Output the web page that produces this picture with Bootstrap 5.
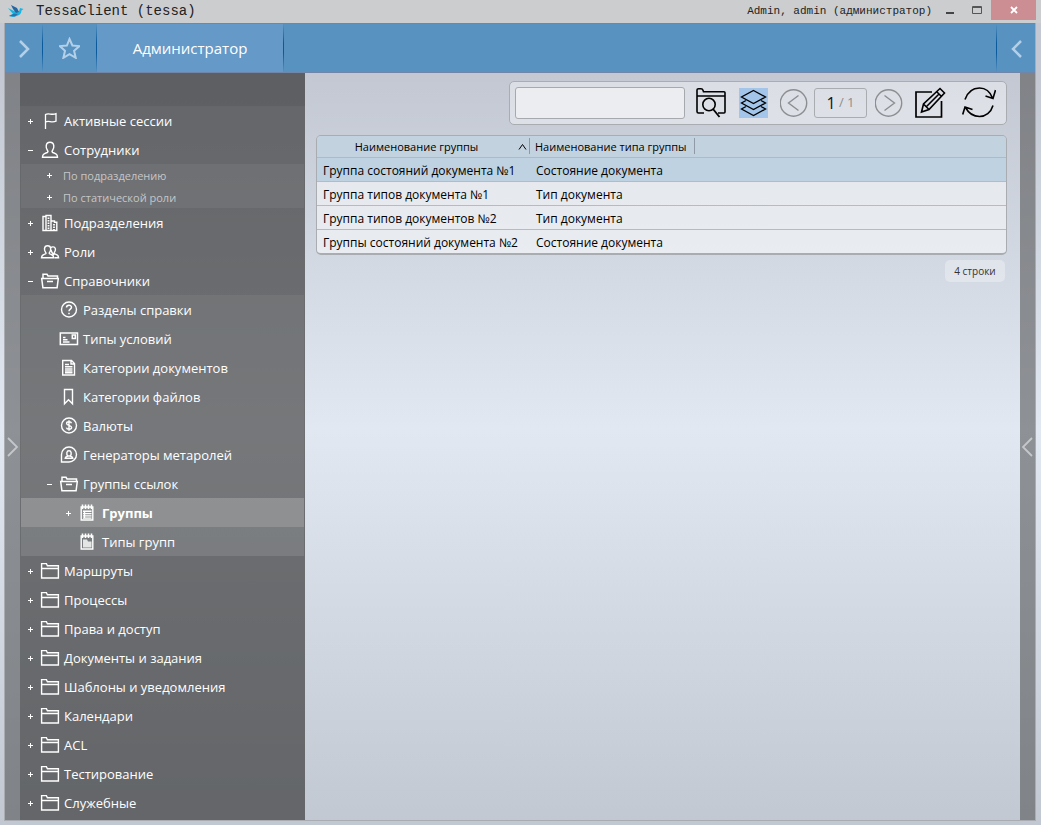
<!DOCTYPE html>
<html lang="ru">
<head>
<meta charset="utf-8">
<meta name="viewport" content="width=device-width, initial-scale=1">
<title>TessaClient (tessa)</title>
<link href="https://cdn.jsdelivr.net/npm/bootstrap@5.3.0/dist/css/bootstrap.min.css" rel="stylesheet">
<style>
body{font-family:"Open Sans","Noto Sans",sans-serif;font-size:13px;color:#000;background:linear-gradient(#c3c8d2 0,#c3c8d2 75px,#e1e8f1 52%,#c1c8d2 100%)}
svg{display:block;fill:none;stroke:currentColor}
button{padding:0;border:0;background:none;color:inherit}
.titlebar{height:23px;padding-right:5px;background:#cccdcf;font-family:"Liberation Mono",monospace;color:#222}
.titlebar .logo{stroke:none}
.app-name{font-size:14px;line-height:23px}
.user-name{font-size:11px;line-height:22px;margin-right:14px}
.win-close{width:45px;height:20px;background:#cc8e92;color:#fff}
.frame{margin:0 5px 4px 4px;border:solid #a9adb2;border-width:0 1px 1px}
.ribbon{height:50px;background:#5792c1;border-top:1px solid #7185a8;border-bottom:1px solid #7185a8;color:#b4d0e8}
.ribbon .sep{width:1px;background:linear-gradient(#5792c1,#0a5a9c 40%,#0a5a9c 60%,#5792c1)}
.tab-main{width:186px;background:#6599c7;color:#fff;font-size:15px}
.strip{width:15px;background:rgba(77,77,77,.56);color:#c5c7ca}
.sidebar{width:285px;background:rgba(60,60,60,.7);color:#fff}
.side-head{height:33px;background:rgba(60,60,60,.16)}
.tree ul{background:rgba(255,255,255,.06);margin:0 1px}
.tree ul ul{margin:0}
.node{height:29px}
.node a{color:#fff;text-decoration:none;padding:2px 0 0 4px;white-space:nowrap}
.twist{width:20px;height:20px;flex:none}
.pic{width:20px;height:20px;flex:none}
.lv2{padding-left:18px}
.lv3{padding-left:37px}
.views .node{height:22px}
.views .node a{font-size:11px;color:#c6c6c7}
.current{background:rgba(255,255,255,.15)}
.current a{font-weight:700}
.main-area{padding:8px 13px 8px 11px}
.tools{height:44px;padding:0 10px 0 5px;border:1px solid #a9adb2;border-radius:5px;background:rgba(255,255,255,.4)}
.tools .search{width:170px;height:32px;border:1px solid #a6a9ad;border-radius:3px;background:#ecedf1;padding:0 6px;margin-right:11px}
.tools .off{color:#8c8e92}
.layers-on{background:#a3c5ea;height:30px;width:29px;margin-left:13px}
.pager{width:53px;height:30px;border:1px solid #a9adb2;border-radius:3px;color:#8c8e92}
.pager b{font-weight:400;font-size:16px;color:#111}
.grid{border:1px solid #a9adb2;border-bottom-width:2px;border-radius:5px;overflow:hidden;margin-top:10px}
.grid table{table-layout:fixed;width:100%;border-collapse:separate;border-spacing:0;line-height:18px}
.grid th{height:22px;padding:0 2px 0 6px;background:#c3d2df;border-bottom:1px solid #b0b9c4;font-weight:400;font-size:11px;white-space:nowrap}
.grid th + th{background-image:linear-gradient(#8f9aa6,#8f9aa6);background-size:1px 16px;background-repeat:no-repeat;background-position:0 2px}
.grid td{height:24px;padding:2px 6px 0;background:rgba(255,255,255,.5);border-bottom:1px solid #b6bbc3;font-size:12px;white-space:nowrap}
.grid td + td{padding-left:7px}
.grid tr:last-child td{border-bottom:0;height:23px}
.grid .picked td{background:#bfd2e2}
.total{font-size:10px;height:22px;width:60px;border-radius:5px;background:rgba(255,255,255,.3);color:#333;margin:5px 2px 0 0}
</style>
</head>
<body class="min-vh-100 d-flex flex-column">
<svg width="0" height="0" class="position-absolute" aria-hidden="true">
<defs>
<symbol id="plus" viewBox="0 0 20 20"><path d="M8 10.500h5M10.500 8v5"/></symbol>
<symbol id="minus" viewBox="0 0 20 20"><path d="M8 10.500h5"/></symbol>
<symbol id="flag" viewBox="0 0 20 20"><path stroke-width="1.300" d="M5.500 18V3.500c3-2 6 1 10.500-.8v7.500c-4.500 1.800-7.500-1-10.500.8"/></symbol>
<symbol id="user" viewBox="0 0 20 20"><path stroke-width="1.400" d="M2.500 17.300c0-3.500 2-3.800 4.800-4.800 1-.5.800-1.200.2-2-1-1.500-1.500-3-1.300-4.700C6.500 3.500 8 2.300 10 2.300s3.500 1.200 3.800 3.500c.2 1.700-.3 3.200-1.300 4.700-.6.800-.8 1.500.2 2 2.800 1 4.800 1.300 4.800 4.800z"/></symbol>
<symbol id="users" viewBox="0 0 20 20"><path stroke-width="1.400" d="M1.500 15.700c0-2.700 1.800-3 3.900-3.800.9-.4.6-1 .1-1.700-.7-1.200-1.100-2.300-1-3.600C4.700 4.700 6 3.800 7.600 3.800s2.900.9 3.100 2.800c.1 1.300-.3 2.400-1 3.600-.5.700-.8 1.300.1 1.700 2.100.8 3.900 1.100 3.900 3.800zM11 5.500c1-1 3.500-.8 4.200.8.5 1.200 0 2.800-.8 4-.7 1 0 1.500 1 1.800 1.800.5 3.200 1 3.200 3.600h-4M11 8c.5 2 1 3.500 3 5"/></symbol>
<symbol id="building" viewBox="0 0 20 20"><path stroke-width="1.400" d="M6 3.200V2.500h5v15M3 17.500v-14h3v14zM3 17.500h13.800V9.200h-2.300V8H11M11 17.500V8"/><path stroke-dasharray="1.500 1" stroke-width="1.800" d="M8.500 4.500V17M14 11v6"/></symbol>
<symbol id="folder" viewBox="0 0 20 20"><path stroke-width="1.400" d="M1.600 17V2.600h4.800l1 2.100h11V17zM1.600 7.500h16.800"/></symbol>
<symbol id="open" viewBox="0 0 20 20"><path stroke-width="1.500" d="M3 7.500V3.300h4l1 1.700h9.500v2.500M1.700 7.500h16.600l-1.200 9.200H2.900zM7 10.500h6"/></symbol>
<symbol id="help" viewBox="0 0 20 20"><circle cx="10" cy="9.500" r="7.500" stroke-width="1.400"/><path stroke-width="1.500" d="M7.500 7.500C7.500 4.500 12.500 4.500 12.500 7.300c0 1.800-2.500 1.900-2.500 4M10 12.700v1.500"/></symbol>
<symbol id="envelope" viewBox="0 0 20 20"><path stroke-width="1.500" d="M1.300 4h17.200v11.500H1.300zM13.300 6h3v3.500h-3zM4 8.500h2.500M4 10.800h4.500M4 13h6.500"/></symbol>
<symbol id="doc" viewBox="0 0 20 20"><path stroke-width="1.400" d="M3.700 2.500h8.800l3 3V17H3.700zM12 2.500V6h3.500M6 6.500h4M6 8.800h7.500M6 11h7.500M6 13h7.500M6 14.800h7.500"/></symbol>
<symbol id="ribbon-pic" viewBox="0 0 20 20"><path stroke-width="1.400" d="M5.500 2.500h8v14.300L9.500 12.800 5.500 16.800z"/></symbol>
<symbol id="coin" viewBox="0 0 20 20"><circle cx="10" cy="9.500" r="7.500" stroke-width="1.400"/><path stroke-width="1.400" d="M12.500 7.200C12 5.300 7.600 5.300 7.600 7.400c0 2.400 5 1.600 5 4.200 0 2.200-4.700 2.200-5.200 0M10 4.200v10.600"/></symbol>
<symbol id="meta" viewBox="0 0 20 20"><path stroke-width="1.400" d="M2.500 17V9.500A7.500 7.500 0 1 1 10 17z"/><path stroke-width="1.400" d="M6.200 13.200c0-1.500 1.500-1.700 2.500-2.200-1.500-2-1.200-5.200 1.300-5.200s2.800 3.200 1.300 5.200c1 .5 2.500.7 2.500 2.200zM8.500 11h3"/></symbol>
<symbol id="list" viewBox="0 0 20 20"><path stroke-width="1.400" d="M3.200 4h11.600v13H3.200zM5 8.200h8.500M5 10.600h8.500M5 12.900h8.500M5 15.100h8.500M6.500 7.500v8"/><path stroke-width="1.600" d="M4.500 1.500v4.500M7.500 1.500v4.500M10.500 1.500v4.500M13.500 1.500v4.500"/></symbol>
<symbol id="list2" viewBox="0 0 20 20"><path stroke-width="1.400" d="M3.200 4h11.600v13H3.200z"/><path fill="currentColor" fill-opacity=".8" stroke="none" d="M5 7.500h4l1 2h3.500v6H5z"/><path stroke-width="1.600" d="M4.500 1.500v4.500M7.500 1.500v4.500M10.500 1.500v4.500M13.500 1.500v4.500"/></symbol>
</defs>
</svg>

<header class="titlebar d-flex align-items-start">
  <svg class="logo ms-2 mt-1" width="16" height="15" viewBox="0 0 16 15"><path fill="#19b5e0" d="M0 4l6 3 5 .5L12 4l3.500 1-2 1.500c0 3-2 5-5 5.500L5 13l-4-1 4-2z"/><path fill="#2466a0" d="M3 1l6 3 2 4-3 1-3-4z"/><path fill="#2875ad" d="M1 12l5-2.500 4 .5-3 2.500z"/></svg>
  <span class="app-name ms-2 ps-1 flex-grow-1">TessaClient (tessa)</span>
  <span class="user-name">Admin, admin (администратор)</span>
  <button type="button" aria-label="Свернуть" class="me-3"><svg width="10" height="20"><path d="M0 13h8" stroke="#444" stroke-width="2"/></svg></button>
  <button type="button" aria-label="Развернуть" class="me-2"><svg width="11" height="20"><path d="M.5 6.500h9v7h-9zM.5 7.500h9" stroke="#555"/></svg></button>
  <button type="button" aria-label="Закрыть" class="win-close d-flex align-items-center justify-content-center"><svg width="8" height="8"><path d="M1 1l6 6M7 1L1 7" stroke-width="1.800"/></svg></button>
</header>

<div class="frame flex-grow-1 d-flex flex-column">
  <nav class="ribbon d-flex">
    <button type="button" aria-label="Вперёд" class="px-2"><svg width="21" height="22"><path d="M7 4l8 8-8 8" stroke-width="2.500"/></svg></button>
    <span class="sep"></span>
    <button type="button" aria-label="Избранное" class="px-3"><svg width="21" height="22"><path stroke-width="2" d="M10.500 2l2.900 6.500 7 .6-5.300 4.700 1.600 7-6.200-3.700-6.100 3.700 1.600-7L.9 9.100l7-.6z"/></svg></button>
    <span class="sep"></span>
    <button type="button" class="tab-main">Администратор</button>
    <span class="sep"></span>
    <span class="flex-grow-1"></span>
    <span class="sep"></span>
    <button type="button" aria-label="Назад" class="px-2"><svg width="22" height="22"><path d="M16 4l-8 8 8 8" stroke-width="2.500"/></svg></button>
  </nav>

  <div class="d-flex flex-grow-1">
    <button type="button" aria-label="Показать панель" class="strip d-flex align-items-center flex-shrink-0"><svg width="15" height="20"><path d="M3 1l9 9-9 9" stroke-width="1.800"/></svg></button>
    <aside class="sidebar flex-shrink-0">
      <div class="side-head"></div>
      <ul class="tree list-unstyled mb-0">
        <li><div class="node d-flex align-items-center"><button type="button" class="twist" aria-label="Раскрыть"><svg width="20" height="20"><use href="#plus"/></svg></button><svg class="pic"><use href="#flag"/></svg><a href="#">Активные сессии</a></div></li>
        <li><div class="node d-flex align-items-center"><button type="button" class="twist" aria-label="Свернуть"><svg width="20" height="20"><use href="#minus"/></svg></button><svg class="pic"><use href="#user"/></svg><a href="#">Сотрудники</a></div>
          <ul class="views list-unstyled">
            <li class="node lv2 d-flex align-items-center"><button type="button" class="twist" aria-label="Раскрыть"><svg width="20" height="20"><use href="#plus"/></svg></button><a href="#">По подразделению</a></li>
            <li class="node lv2 d-flex align-items-center"><button type="button" class="twist" aria-label="Раскрыть"><svg width="20" height="20"><use href="#plus"/></svg></button><a href="#">По статической роли</a></li>
          </ul></li>
        <li><div class="node d-flex align-items-center"><button type="button" class="twist" aria-label="Раскрыть"><svg width="20" height="20"><use href="#plus"/></svg></button><svg class="pic"><use href="#building"/></svg><a href="#">Подразделения</a></div></li>
        <li><div class="node d-flex align-items-center"><button type="button" class="twist" aria-label="Раскрыть"><svg width="20" height="20"><use href="#plus"/></svg></button><svg class="pic"><use href="#users"/></svg><a href="#">Роли</a></div></li>
        <li><div class="node d-flex align-items-center"><button type="button" class="twist" aria-label="Свернуть"><svg width="20" height="20"><use href="#minus"/></svg></button><svg class="pic"><use href="#open"/></svg><a href="#">Справочники</a></div>
          <ul class="list-unstyled">
            <li class="node lv2 d-flex align-items-center"><span class="twist"></span><svg class="pic"><use href="#help"/></svg><a href="#">Разделы справки</a></li>
            <li class="node lv2 d-flex align-items-center"><span class="twist"></span><svg class="pic"><use href="#envelope"/></svg><a href="#">Типы условий</a></li>
            <li class="node lv2 d-flex align-items-center"><span class="twist"></span><svg class="pic"><use href="#doc"/></svg><a href="#">Категории документов</a></li>
            <li class="node lv2 d-flex align-items-center"><span class="twist"></span><svg class="pic"><use href="#ribbon-pic"/></svg><a href="#">Категории файлов</a></li>
            <li class="node lv2 d-flex align-items-center"><span class="twist"></span><svg class="pic"><use href="#coin"/></svg><a href="#">Валюты</a></li>
            <li class="node lv2 d-flex align-items-center"><span class="twist"></span><svg class="pic"><use href="#meta"/></svg><a href="#">Генераторы метаролей</a></li>
            <li><div class="node lv2 d-flex align-items-center"><button type="button" class="twist" aria-label="Свернуть"><svg width="20" height="20"><use href="#minus"/></svg></button><svg class="pic"><use href="#open"/></svg><a href="#">Группы ссылок</a></div>
              <ul class="list-unstyled">
                <li class="node lv3 current d-flex align-items-center"><button type="button" class="twist" aria-label="Раскрыть"><svg width="20" height="20"><use href="#plus"/></svg></button><svg class="pic"><use href="#list"/></svg><a href="#">Группы</a></li>
                <li class="node lv3 d-flex align-items-center"><span class="twist"></span><svg class="pic"><use href="#list2"/></svg><a href="#">Типы групп</a></li>
              </ul></li>
          </ul></li>
        <li><div class="node d-flex align-items-center"><button type="button" class="twist" aria-label="Раскрыть"><svg width="20" height="20"><use href="#plus"/></svg></button><svg class="pic"><use href="#folder"/></svg><a href="#">Маршруты</a></div></li>
        <li><div class="node d-flex align-items-center"><button type="button" class="twist" aria-label="Раскрыть"><svg width="20" height="20"><use href="#plus"/></svg></button><svg class="pic"><use href="#folder"/></svg><a href="#">Процессы</a></div></li>
        <li><div class="node d-flex align-items-center"><button type="button" class="twist" aria-label="Раскрыть"><svg width="20" height="20"><use href="#plus"/></svg></button><svg class="pic"><use href="#folder"/></svg><a href="#">Права и доступ</a></div></li>
        <li><div class="node d-flex align-items-center"><button type="button" class="twist" aria-label="Раскрыть"><svg width="20" height="20"><use href="#plus"/></svg></button><svg class="pic"><use href="#folder"/></svg><a href="#">Документы и задания</a></div></li>
        <li><div class="node d-flex align-items-center"><button type="button" class="twist" aria-label="Раскрыть"><svg width="20" height="20"><use href="#plus"/></svg></button><svg class="pic"><use href="#folder"/></svg><a href="#">Шаблоны и уведомления</a></div></li>
        <li><div class="node d-flex align-items-center"><button type="button" class="twist" aria-label="Раскрыть"><svg width="20" height="20"><use href="#plus"/></svg></button><svg class="pic"><use href="#folder"/></svg><a href="#">Календари</a></div></li>
        <li><div class="node d-flex align-items-center"><button type="button" class="twist" aria-label="Раскрыть"><svg width="20" height="20"><use href="#plus"/></svg></button><svg class="pic"><use href="#folder"/></svg><a href="#">ACL</a></div></li>
        <li><div class="node d-flex align-items-center"><button type="button" class="twist" aria-label="Раскрыть"><svg width="20" height="20"><use href="#plus"/></svg></button><svg class="pic"><use href="#folder"/></svg><a href="#">Тестирование</a></div></li>
        <li><div class="node d-flex align-items-center"><button type="button" class="twist" aria-label="Раскрыть"><svg width="20" height="20"><use href="#plus"/></svg></button><svg class="pic"><use href="#folder"/></svg><a href="#">Служебные</a></div></li>
      </ul>
    </aside>

    <main class="main-area flex-grow-1 d-flex flex-column">
      <div class="tools d-flex align-items-center align-self-end">
        <input type="text" class="search" aria-label="Поиск">
        <button type="button" aria-label="Найти в папке"><svg width="30" height="32" viewBox="0 0 30 32"><path stroke-width="1.600" d="M8 26H2.500Q1 26 1 24.500V3Q1 1.700 2.500 1.700H5q1.500 0 2 1.500l.5 1.500H28q1 0 1 1V25q0 1-1 1h-6M1 9h28"/><circle cx="13" cy="17.500" r="6.200" stroke-width="1.600"/><path stroke-width="1.800" d="M17 22l6.500 8"/></svg></button>
        <button type="button" aria-label="Группировка" class="layers-on"><svg width="29" height="30" viewBox="0 0 29 30"><path stroke-width="1.300" d="M14.500 2.500l12 6.500-12 6.500L2.500 9zM7 12.500L2.500 15l12 6.500 12-6.500-4.500-2.500M7 18.500L2.500 21l12 6.500 12-6.500-4.500-2.500"/></svg></button>
        <button type="button" aria-label="Предыдущая страница" class="off ms-2 ps-1"><svg width="30" height="30" viewBox="0 0 30 30"><circle cx="13.500" cy="15" r="13.200" stroke-width="1.400"/><path stroke-width="1.400" d="M18.500 7.500l-10 7.500 10 7.500"/></svg></button>
        <div class="pager ms-1 d-flex align-items-center justify-content-center"><b>1</b>&nbsp;/&nbsp;1</div>
        <button type="button" aria-label="Следующая страница" class="off ms-2"><svg width="28" height="30" viewBox="0 0 28 30"><circle cx="13.500" cy="15" r="13.200" stroke-width="1.400"/><path stroke-width="1.400" d="M9.500 7.500l10 7.500-10 7.500"/></svg></button>
        <button type="button" aria-label="Изменить" class="ms-2 ps-1"><svg width="31" height="32" viewBox="0 0 31 32"><path stroke-width="1.700" d="M17 5H1v25h25.500V14"/><path stroke-width="1.600" d="M6.500 25l2-8L25 1.500l4.500 4.500L14 22.500zM8.500 17l5.500 5.500M21.500 4.500L26.500 9.500M11.300 19.700L24 7"/></svg></button>
        <button type="button" aria-label="Обновить" class="ms-3"><svg width="34" height="32" viewBox="0 0 34 32"><path stroke-width="1.600" d="M3 12.500C6 4 12 1 17.500 1c6 0 10.500 3.500 13 10M31 18.500c-2 7-7.500 11-13.500 11S6.500 26 3.500 20.500M23.500 9l7.500 2.500 2.500-8.500M.7 27.500L3 20l7.500 2.500"/></svg></button>
      </div>
      <div class="grid">
        <table>
          <colgroup><col style="width:212px"><col style="width:165px"><col></colgroup>
          <thead><tr><th scope="col"><div class="d-flex align-items-center"><span class="flex-grow-1 text-center pe-2">Наименование группы</span><svg class="flex-shrink-0" width="9" height="8"><path d="M1 6.500l3.500-5L8 6.500"/></svg></div></th><th scope="col">Наименование типа группы</th><th></th></tr></thead>
          <tbody>
            <tr class="picked"><td>Группа состояний документа №1</td><td>Состояние документа</td><td></td></tr>
            <tr><td>Группа типов документа №1</td><td>Тип документа</td><td></td></tr>
            <tr><td>Группа типов документов №2</td><td>Тип документа</td><td></td></tr>
            <tr><td>Группы состояний документа №2</td><td>Состояние документа</td><td></td></tr>
          </tbody>
        </table>
      </div>
      <div class="total align-self-end d-flex align-items-center justify-content-center">4 строки</div>
    </main>

    <button type="button" aria-label="Показать правую панель" class="strip d-flex align-items-center flex-shrink-0"><svg width="15" height="20"><path d="M12 1l-9 9 9 9" stroke-width="1.800"/></svg></button>
  </div>
</div>
<script src="https://cdn.jsdelivr.net/npm/bootstrap@5.3.0/dist/js/bootstrap.bundle.min.js"></script>
</body>
</html>
